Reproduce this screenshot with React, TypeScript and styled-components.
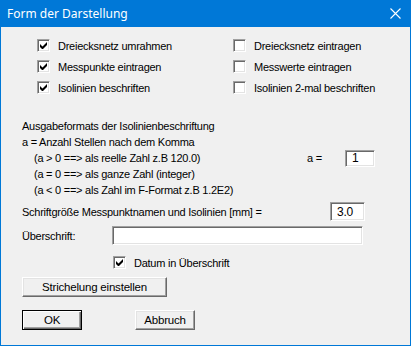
import React from "react";
import styled, { createGlobalStyle } from "styled-components";

const GlobalStyle = createGlobalStyle`
  html, body { margin: 0; padding: 0; background: #ffffff; }
  body {
    font-family: "Liberation Sans", Arial, sans-serif;
    font-size: 11px;
    letter-spacing: -0.25px;
    color: #000;
  }
`;

const Window = styled.div`
  width: 411px;
  height: 346px;
  box-sizing: border-box;
  border: 1px solid #0078d7;
  border-top: none;
  background: #f0f0f0;
  display: flex;
  flex-direction: column;
`;

const TitleBar = styled.div`
  height: 27px;
  margin: 0 -1px;
  background: #0078d7;
  color: #ffffff;
  display: flex;
  align-items: center;
  justify-content: space-between;
  padding: 0 10px 0 7px;
  font-family: "Noto Sans", "Open Sans", sans-serif;
  font-size: 12px;
  letter-spacing: 0;
  flex-shrink: 0;
`;

const Body = styled.div`
  padding: 8px 0 0 21px;
  display: flex;
  flex-direction: column;
`;

const CheckGrid = styled.div`
  display: grid;
  grid-template-columns: 196px 170px;
  grid-auto-rows: 21px;
  padding-left: 15px;
`;

const CheckRow = styled.label`
  display: flex;
  align-items: center;
  gap: 8px;
  white-space: nowrap;
`;

const Box = styled.span`
  width: 13px;
  height: 13px;
  box-sizing: border-box;
  background: #ffffff;
  border-top: 1px solid #a0a0a0;
  border-left: 1px solid #a0a0a0;
  border-right: 1px solid #ffffff;
  border-bottom: 1px solid #ffffff;
  box-shadow: inset 1px 1px 0 #696969, inset -1px -1px 0 #e3e3e3;
  display: inline-flex;
  align-items: center;
  justify-content: center;
  flex-shrink: 0;
`;

const TextBlock = styled.div`
  margin-top: 20px;
  display: flex;
  flex-direction: column;
`;

const Line = styled.div<{ $indent?: boolean }>`
  height: 16px;
  line-height: 16px;
  padding-left: ${(p) => (p.$indent ? "12px" : "0")};
  display: flex;
  align-items: center;
  white-space: nowrap;
`;

const LineText = styled.span<{ $w: number }>`
  width: ${(p) => p.$w}px;
  flex-shrink: 0;
`;

const Field = styled.div<{ $w: number; $h: number }>`
  width: ${(p) => p.$w}px;
  height: ${(p) => p.$h}px;
  box-sizing: border-box;
  background: #ffffff;
  border-top: 1px solid #a0a0a0;
  border-left: 1px solid #a0a0a0;
  border-right: 1px solid #ffffff;
  border-bottom: 1px solid #ffffff;
  box-shadow: inset 1px 1px 0 #696969, inset -1px -1px 0 #e3e3e3;
  padding-left: 6px;
  font-size: 12px;
  display: flex;
  align-items: center;
  flex-shrink: 0;
`;

const Row = styled.div<{ $mt: number }>`
  margin-top: ${(p) => p.$mt}px;
  display: flex;
  align-items: center;
  white-space: nowrap;
`;

const DatumRow = styled(CheckRow)`
  margin-top: 11px;
  padding-left: 91px;
  height: 13px;
`;

const Button = styled.button<{ $w: number; $default?: boolean }>`
  width: ${(p) => p.$w}px;
  height: 20px;
  box-sizing: border-box;
  padding: 0;
  background: #f0f0f0;
  font-family: "Liberation Sans", Arial, sans-serif;
  font-size: 11.5px;
  letter-spacing: -0.2px;
  color: #000;
  border-top: 1px solid #ffffff;
  border-left: 1px solid #ffffff;
  border-right: 1px solid #696969;
  border-bottom: 1px solid #696969;
  box-shadow: inset -1px -1px 0 #a0a0a0, inset 1px 1px 0 #e3e3e3;
  ${(p) =>
    p.$default &&
    `
    border: 1px solid #000;
    box-shadow: inset 1px 1px 0 #ffffff, inset -1px -1px 0 #696969, inset -2px -2px 0 #a0a0a0;
  `}
`;

const ButtonRow = styled.div`
  margin-top: 13px;
  display: flex;
  gap: 53px;
`;

const Check = ({ on }: { on?: boolean }) => (
  <Box>
    {on && (
      <svg width="7" height="7" viewBox="0 0 7 7">
        <path d="M0 2v3l2 2h1l4-4V0L2.5 4.5z" fill="#000" />
      </svg>
    )}
  </Box>
);

const options = [
  ["Dreiecksnetz umrahmen", true],
  ["Dreiecksnetz eintragen", false],
  ["Messpunkte eintragen", true],
  ["Messwerte eintragen", false],
  ["Isolinien beschriften", true],
  ["Isolinien 2-mal beschriften", false],
] as const;

export default function App() {
  return (
    <>
      <GlobalStyle />
      <Window>
        <TitleBar>
          <span>Form der Darstellung</span>
          <svg width="11" height="11" viewBox="0 0 11 11">
            <path d="M0.5 0.5l10 10M10.5 0.5l-10 10" stroke="#fff" strokeWidth="1.1" />
          </svg>
        </TitleBar>
        <Body>
          <CheckGrid>
            {options.map(([label, on]) => (
              <CheckRow key={label}>
                <Check on={on} />
                {label}
              </CheckRow>
            ))}
          </CheckGrid>

          <TextBlock>
            <Line>Ausgabeformats der Isolinienbeschriftung</Line>
            <Line>a = Anzahl Stellen nach dem Komma</Line>
            <Line $indent>
              <LineText $w={273}>(a &gt; 0 ==&gt; als reelle Zahl z.B 120.0)</LineText>
              <LineText $w={38}>a =</LineText>
              <Field $w={30} $h={17}>1</Field>
            </Line>
            <Line $indent>(a = 0 ==&gt; als ganze Zahl (integer)</Line>
            <Line $indent>(a &lt; 0 ==&gt; als Zahl im F-Format z.B 1.2E2)</Line>
          </TextBlock>

          <Row $mt={4}>
            <LineText $w={308}>Schriftgröße Messpunktnamen und Isolinien [mm] =</LineText>
            <Field $w={35} $h={19}>3.0</Field>
          </Row>

          <Row $mt={5}>
            <LineText $w={90}>Überschrift:</LineText>
            <Field $w={251} $h={19} />
          </Row>

          <DatumRow>
            <Check on />
            Datum in Überschrift
          </DatumRow>

          <Row $mt={8}>
            <Button $w={145}>Strichelung einstellen</Button>
          </Row>

          <ButtonRow>
            <Button $w={60} $default>OK</Button>
            <Button $w={60}>Abbruch</Button>
          </ButtonRow>
        </Body>
      </Window>
    </>
  );
}
